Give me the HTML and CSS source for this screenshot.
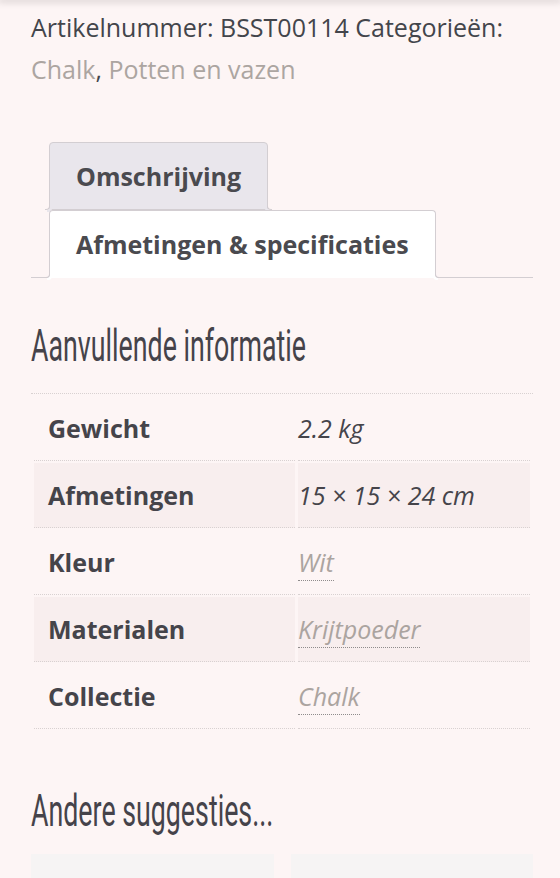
FILE: index.html
```html
<!DOCTYPE html>
<html lang="nl">
<head>
<meta charset="utf-8">
<title>Product</title>
<link rel="stylesheet" href="styles.css">
</head>
<body>
<div class="topshadow"></div>
<main class="page">
  <p class="meta">Artikelnummer: BSST00114 Categorieën: <a class="cat" href="#">Chalk</a>, <a class="cat" href="#">Potten en vazen</a></p>

  <ul class="tabs">
    <li class="tab">Omschrijving</li>
    <li class="tab active">Afmetingen &amp; specificaties</li>
  </ul>

  <h2 class="section-title">Aanvullende informatie</h2>

  <table class="attrs">
    <tbody>
      <tr><th>Gewicht</th><td>2.2 kg</td></tr>
      <tr><th>Afmetingen</th><td>15 × 15 × 24 cm</td></tr>
      <tr><th>Kleur</th><td><a class="attr-link" href="#">Wit</a></td></tr>
      <tr><th>Materialen</th><td><a class="attr-link" href="#">Krijtpoeder</a></td></tr>
      <tr><th>Collectie</th><td><a class="attr-link" href="#">Chalk</a></td></tr>
    </tbody>
  </table>

  <h2 class="section-title related">Andere suggesties...</h2>

  <div class="cards">
    <div class="card"></div>
    <div class="card"></div>
  </div>
</main>
</body>
</html>
```
FILE: styles.css
```css
html, body {
  margin: 0;
  padding: 0;
}
body {
  background: #fdf5f5;
  font-family: "Open Sans", "Liberation Sans", sans-serif;
  font-size: 25px;
  color: #43454b;
  overflow: hidden;
}
.topshadow {
  height: 0;
  box-shadow: 0 0 7px 2px rgba(0, 0, 0, 0.18);
}
.page {
  padding: 0 27px 0 31px;
}
.meta {
  margin: 6px 0 0;
  line-height: 42px;
}
.cat {
  color: #aca5a1;
  text-decoration: none;
}
.tabs {
  position: relative;
  list-style: none;
  margin: 52px 0 0;
  padding: 0 0 0 18px;
  display: flex;
  flex-direction: column;
  align-items: flex-start;
}
.tabs::before {
  content: "";
  position: absolute;
  left: 0;
  right: 0;
  bottom: 0;
  border-bottom: 1px solid #d3ced2;
  z-index: 1;
}
.tab {
  position: relative;
  border: 1px solid #d3ced2;
  border-radius: 4px 4px 0 0;
  background: #e9e6ec;
  padding: 0 26px;
  line-height: 66px;
  font-weight: 700;
  color: #4a4a4f;
  z-index: 0;
}
.tab::before,
.tab::after {
  content: "";
  position: absolute;
  bottom: -1px;
  width: 5px;
  height: 5px;
  box-sizing: border-box;
  border: 1px solid #d3ced2;
}
.tab::before {
  left: -5px;
  border-bottom-right-radius: 4px;
  border-width: 0 1px 1px 0;
  box-shadow: 2px 2px 0 #e9e6ec;
}
.tab::after {
  right: -5px;
  border-bottom-left-radius: 4px;
  border-width: 0 0 1px 1px;
  box-shadow: -2px 2px 0 #e9e6ec;
}
.tab.active {
  background: #fff;
  border-bottom-color: #fff;
  z-index: 2;
}
.tab.active::before {
  box-shadow: 2px 2px 0 #fff;
}
.tab.active::after {
  box-shadow: -2px 2px 0 #fff;
}
.section-title {
  font-family: "Roboto", "Liberation Sans", sans-serif;
  font-weight: 400;
  font-size: 45px;
  line-height: 60px;
  color: #45434a;
  margin: 38px 0 0;
  white-space: nowrap;
  transform: scaleX(0.595);
  transform-origin: left center;
}
.attrs {
  width: 100%;
  margin-top: 17px;
  border-collapse: separate;
  border-spacing: 3px 2px;
  border-top: 1px dotted #d8d1d1;
}
.attrs th,
.attrs td {
  border-bottom: 1px dotted #d8d1d1;
  line-height: 40px;
  padding: 12px 0;
  text-align: left;
  vertical-align: middle;
}
.attrs th {
  width: 247px;
  padding-left: 14px;
  font-weight: 700;
  color: #45444a;
}
.attrs td {
  font-style: italic;
  color: #45444a;
}
.attrs tr:nth-child(even) th,
.attrs tr:nth-child(even) td {
  background: #f8eeee;
}
.attr-link {
  color: #aba4a0;
  text-decoration: none;
  border-bottom: 1px dotted #8f8c8c;
  padding-bottom: 1px;
}
.related {
  margin-top: 50px;
}
.cards {
  display: grid;
  grid-template-columns: 1fr 1fr;
  gap: 17px;
  margin-top: 13px;
}
.card {
  height: 60px;
  background: #f6f4f4;
}
```
